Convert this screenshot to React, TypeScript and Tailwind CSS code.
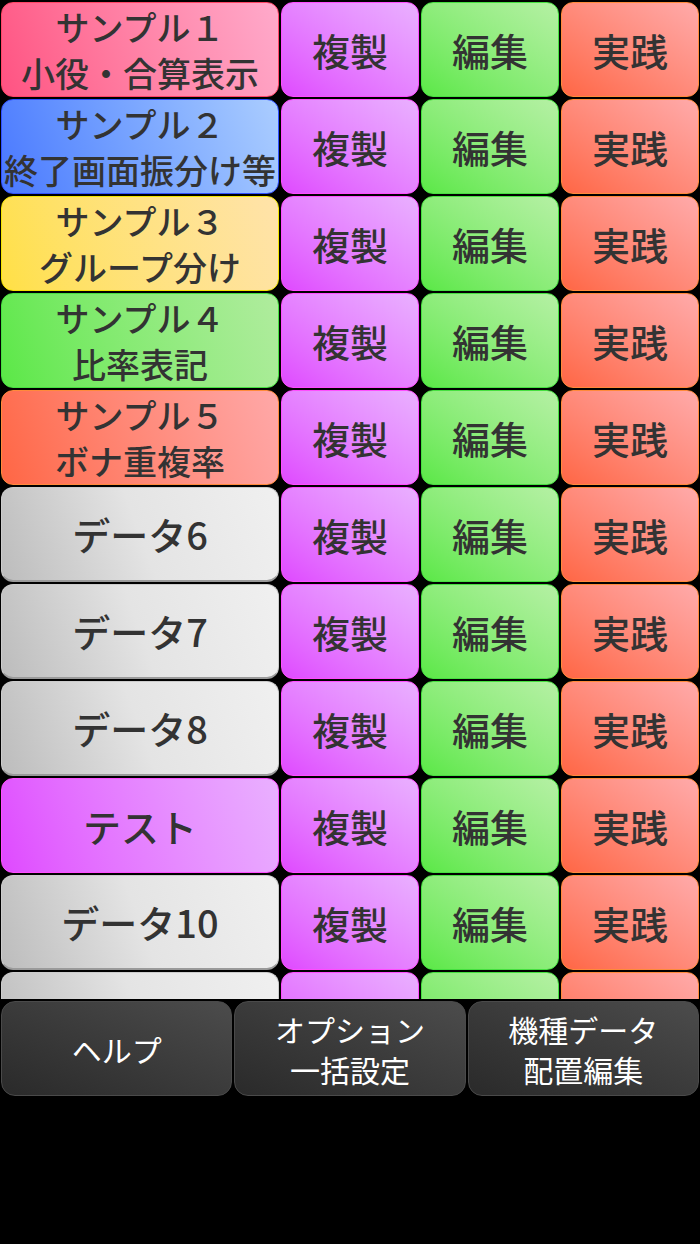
import React from 'react';

type Row = { lines: string[]; tone: string };

const tones: Record<string, string> = {
  pink: 'bg-linear-70 from-[#ff5282] to-[#ffaacb] border-[#ff4466]',
  blue: 'bg-linear-70 from-[#4a78ff] to-[#abcdff] border-[#3050ff]',
  yellow: 'bg-linear-70 from-[#ffe044] to-[#ffe3aa] border-[#f2e400]',
  green: 'bg-linear-70 from-[#5ae846] to-[#b0ec9e] border-[#46e040]',
  orange: 'bg-linear-70 from-[#ff6644] to-[#ffa8a8] border-[#ff8a3a]',
  gray: 'bg-linear-70 from-[#bcbcbc] via-[#e4e4e4] to-[#f0f0f0] border-[#cccccc] border-b-[#9a9a9a] border-b-2',
  magenta: 'bg-linear-70 from-[#df48ff] to-[#e9b0ff] border-[#ff4cff]',
};

const rows: Row[] = [
  { lines: ['サンプル１', '小役・合算表示'], tone: 'pink' },
  { lines: ['サンプル２', '終了画面振分け等'], tone: 'blue' },
  { lines: ['サンプル３', 'グループ分け'], tone: 'yellow' },
  { lines: ['サンプル４', '比率表記'], tone: 'green' },
  { lines: ['サンプル５', 'ボナ重複率'], tone: 'orange' },
  { lines: ['データ6'], tone: 'gray' },
  { lines: ['データ7'], tone: 'gray' },
  { lines: ['データ8'], tone: 'gray' },
  { lines: ['テスト'], tone: 'magenta' },
  { lines: ['データ10'], tone: 'gray' },
  { lines: [], tone: 'gray' }, // scrolled past the fold, label not visible
];

const actions = [
  { label: '複製', cls: 'bg-linear-to-tr from-[#df48ff] to-[#e9b0ff] border-[#ff4cff]' },
  { label: '編集', cls: 'bg-linear-to-tr from-[#5ae846] to-[#b5f0a4] border-[#46e040]' },
  { label: '実践', cls: 'bg-linear-to-tr from-[#ff6644] to-[#ffaaaa] border-[#ff8a3a]' },
];

const footer = [['ヘルプ'], ['オプション', '一括設定'], ['機種データ', '配置編集']];

export default function App() {
  return (
    <div
      className="w-[700px] h-[1244px] bg-black flex flex-col text-[#333] font-medium"
      style={{ fontFamily: '"Noto Sans CJK JP", "Noto Sans", sans-serif' }}
    >
      {/* data list */}
      <div className="h-[999px] overflow-hidden pt-px">
        {rows.map((row, i) => (
          <div key={i} className="grid grid-cols-[280px_140px_140px_140px] h-[97px]">
            <div
              className={`m-px rounded-[12px] border flex flex-col items-center justify-center whitespace-nowrap overflow-hidden ${tones[row.tone]}`}
            >
              {row.lines.length > 1
                ? row.lines.map((l) => (
                    <span key={l} className="text-[34px] leading-[46px]">
                      {l}
                    </span>
                  ))
                : row.lines.length === 1 && <span className="text-[38px] leading-[46px]">{row.lines[0]}</span>}
            </div>
            {actions.map((a) => (
              <div
                key={a.label}
                className={`m-px rounded-[12px] border flex items-center justify-center ${a.cls}`}
              >
                {row.lines.length > 0 && <span className="text-[38px] leading-[46px]">{a.label}</span>}
              </div>
            ))}
          </div>
        ))}
      </div>

      {/* bottom menu */}
      <div className="grid grid-cols-3 h-[99px] py-px">
        {footer.map((lines) => (
          <div
            key={lines[0]}
            className="m-px rounded-[14px] border border-[#4a4a4a] bg-linear-to-tr from-[#2a2a2a] to-[#4c4c4c] flex flex-col items-center justify-center text-white font-normal"
          >
            {lines.map((l) => (
              <span key={l} className="text-[30px] leading-[40px]">
                {l}
              </span>
            ))}
          </div>
        ))}
      </div>
    </div>
  );
}
